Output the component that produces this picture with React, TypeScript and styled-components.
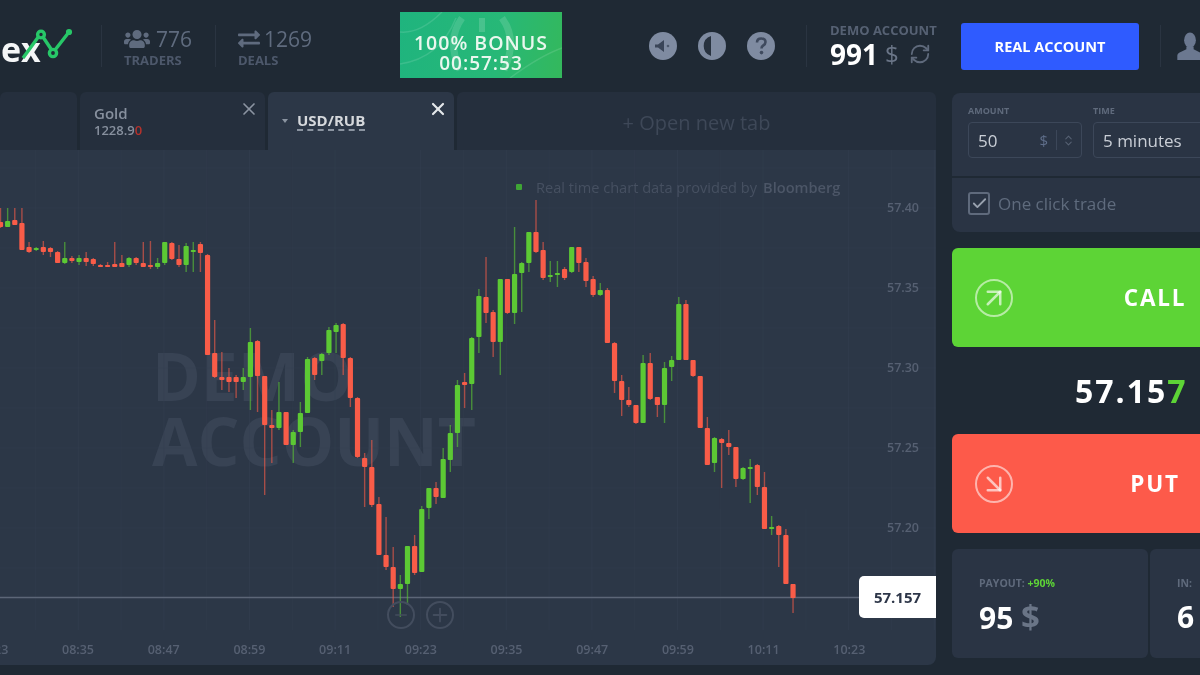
import styled, { createGlobalStyle } from 'styled-components';
import { ArrowDownRight, ArrowUpRight, Check, ChevronsUpDown, Minus, Plus, RefreshCw, X } from 'lucide-react';
import { FaExchangeAlt, FaUsers } from 'react-icons/fa';

const GlobalStyle = createGlobalStyle`
  html, body {
    margin: 0;
    background: #1f2934;
  }
  * {
    box-sizing: border-box;
  }
`;

type Candle = [number, number, number, number, number, 'r' | 'g'];

// index, wick top, wick bottom, body top, body bottom, colour
const candles: Candle[] = [
  [0, 208, 228, 222, 227, 'r'], [1, 208, 227, 221, 227, 'g'], [2, 208, 225, 220, 225, 'r'], [3, 208, 250, 223, 250, 'r'],
  [4, 242, 253, 247, 252, 'r'], [5, 247, 251, 248, 250, 'g'], [6, 241, 255, 247, 252, 'r'], [7, 247, 257, 248, 252, 'r'],
  [8, 251, 263, 252, 263, 'r'], [9, 242, 264, 258, 263, 'g'], [10, 256, 263, 258, 261, 'r'], [11, 255, 265, 258, 262, 'g'],
  [12, 252, 266, 258, 262, 'r'], [13, 258, 266, 259, 264, 'r'], [14, 264, 267, 265, 267, 'r'], [15, 262, 267, 265, 267, 'r'],
  [16, 242, 267, 264, 267, 'r'], [17, 255, 267, 263, 267, 'r'], [18, 257, 267, 258, 265, 'g'], [19, 257, 265, 258, 263, 'r'],
  [20, 242, 267, 263, 267, 'r'], [21, 241, 269, 265, 267, 'r'], [22, 258, 269, 263, 267, 'g'], [23, 242, 265, 242, 263, 'g'],
  [24, 242, 260, 243, 259, 'r'], [25, 245, 267, 259, 265, 'r'], [26, 243, 272, 246, 265, 'g'], [27, 242, 272, 250, 252, 'g'],
  [28, 242, 272, 244, 253, 'r'], [29, 254, 355, 255, 355, 'r'], [30, 320, 378, 353, 377, 'r'], [31, 352, 390, 377, 380, 'r'],
  [32, 368, 392, 377, 382, 'r'], [33, 375, 398, 377, 382, 'r'], [34, 368, 390, 377, 382, 'g'], [35, 328, 410, 342, 377, 'g'],
  [36, 340, 412, 341, 376, 'r'], [37, 376, 495, 376, 425, 'r'], [38, 410, 463, 425, 428, 'r'], [39, 382, 430, 412, 428, 'g'],
  [40, 412, 445, 412, 445, 'r'], [41, 430, 463, 432, 445, 'g'], [42, 402, 447, 413, 432, 'g'], [43, 357, 413, 359, 413, 'g'],
  [44, 357, 380, 358, 375, 'r'], [45, 353, 375, 354, 361, 'g'], [46, 327, 355, 330, 353, 'g'], [47, 323, 353, 325, 332, 'g'],
  [48, 323, 375, 324, 358, 'r'], [49, 357, 407, 358, 398, 'r'], [50, 397, 458, 398, 457, 'r'], [51, 453, 507, 458, 467, 'r'],
  [52, 440, 507, 467, 505, 'r'], [53, 497, 555, 504, 555, 'r'], [54, 517, 570, 555, 567, 'r'], [55, 547, 607, 567, 589, 'r'],
  [56, 575, 617, 584, 589, 'g'], [57, 546, 605, 546, 584, 'g'], [58, 535, 575, 546, 573, 'r'], [59, 506, 572, 509, 572, 'g'],
  [60, 488, 519, 488, 508, 'g'], [61, 482, 504, 488, 497, 'r'], [62, 448, 498, 459, 498, 'g'], [63, 425, 472, 433, 460, 'g'],
  [64, 380, 447, 385, 433, 'g'], [65, 373, 408, 382, 385, 'r'], [66, 337, 410, 338, 384, 'g'], [67, 289, 353, 296, 337, 'g'],
  [68, 257, 323, 297, 313, 'r'], [69, 310, 357, 312, 342, 'r'], [70, 279, 375, 279, 342, 'g'], [71, 279, 314, 279, 313, 'r'],
  [72, 227, 324, 274, 313, 'g'], [73, 262, 312, 263, 273, 'g'], [74, 232, 272, 232, 263, 'g'], [75, 200, 253, 232, 252, 'r'],
  [76, 242, 280, 250, 278, 'r'], [77, 261, 282, 275, 277, 'g'], [78, 261, 287, 273, 275, 'g'], [79, 267, 280, 269, 278, 'r'],
  [80, 247, 273, 247, 272, 'g'], [81, 247, 272, 247, 263, 'r'], [82, 258, 287, 262, 281, 'r'], [83, 276, 297, 279, 295, 'r'],
  [84, 283, 296, 290, 295, 'g'], [85, 288, 343, 290, 343, 'r'], [86, 342, 393, 343, 381, 'r'], [87, 375, 416, 381, 400, 'r'],
  [88, 387, 407, 400, 405, 'r'], [89, 405, 424, 405, 423, 'r'], [90, 355, 423, 363, 423, 'g'], [91, 353, 400, 363, 399, 'r'],
  [92, 397, 417, 397, 405, 'r'], [93, 362, 423, 368, 405, 'g'], [94, 356, 381, 360, 367, 'g'], [95, 297, 360, 304, 360, 'g'],
  [96, 300, 360, 304, 360, 'r'], [97, 360, 377, 360, 376, 'r'], [98, 376, 428, 376, 428, 'r'], [99, 417, 465, 428, 465, 'r'],
  [100, 437, 472, 438, 463, 'g'], [101, 438, 488, 439, 443, 'r'], [102, 430, 455, 443, 447, 'r'], [103, 447, 487, 447, 479, 'r'],
  [104, 467, 480, 468, 479, 'g'], [105, 459, 503, 467, 469, 'g'], [106, 464, 495, 465, 487, 'r'], [107, 472, 529, 487, 529, 'r'],
  [108, 516, 535, 527, 529, 'g'], [109, 525, 567, 526, 535, 'r'], [110, 529, 584, 535, 584, 'r'], [111, 584, 613, 584, 598, 'r'],
];

const priceLabels = ['57.40', '57.35', '57.30', '57.25', '57.20'];
const timeLabels = ['08:23', '08:35', '08:47', '08:59', '09:11', '09:23', '09:35', '09:47', '09:59', '10:11', '10:23'];

const CandleChart = () => (
  <ChartSvg viewBox="0 150 936 515">
    {Array.from({ length: 22 }, (_, i) => (
      <line key={i} x1={35.5 + i * 42.8} x2={35.5 + i * 42.8} y1={150} y2={630} stroke="#354052" strokeWidth={1} opacity={i % 2 ? 0.5 : 0.3} />
    ))}
    {Array.from({ length: 11 }, (_, i) => (
      <line key={i} x1={0} x2={936} y1={168 + i * 40} y2={168 + i * 40} stroke="#354052" strokeWidth={1} opacity={0.35} />
    ))}
    <line x1={0} x2={860} y1={597.5} y2={597.5} stroke="#5c6677" strokeWidth={1.4} />
    {candles.map(([i, wt, wb, bt, bb, c]) => {
      const x = 7.14 * i + 0.5;
      const color = c === 'r' ? '#f95c48' : '#5cc934';
      return (
        <g key={i}>
          <line x1={x} x2={x} y1={wt} y2={wb} stroke={color} strokeWidth={1.4} opacity={0.6} />
          <rect x={x - 2.6} y={bt} width={5.2} height={Math.max(bb - bt, 2)} rx={1} fill={color} />
        </g>
      );
    })}
    {priceLabels.map((p, i) => (
      <AxisText key={p} x={887} y={212 + i * 80}>{p}</AxisText>
    ))}
    {timeLabels.map((t, i) => (
      <AxisText key={t} x={-23.7 + i * 85.7} y={654}>{t}</AxisText>
    ))}
  </ChartSvg>
);

const LogoMark = () => (
  <svg width="52" height="36" viewBox="0 0 52 36" fill="none" stroke="#27c768" strokeWidth="3.4">
    <path d="M2 30 L18 8 M22 9 L30 21 M34 22 L48 4" />
    <circle cx="20" cy="6.5" r="3.4" />
    <circle cx="32" cy="25" r="3.6" />
    <circle cx="48" cy="4" r="1.4" fill="#27c768" />
  </svg>
);

const SpeakerIcon = () => (
  <svg width="30" height="30" viewBox="0 0 30 30">
    <circle cx="15" cy="15" r="14" fill="#7f8ba1" />
    <path d="M7 13.5 h3 l6-4.5 v12 l-6-4.5 h-3 z" fill="#3a4558" />
    <circle cx="20" cy="15" r="1.3" fill="#4c586c" />
  </svg>
);

const ContrastIcon = () => (
  <svg width="30" height="30" viewBox="0 0 30 30">
    <circle cx="15" cy="15" r="14" fill="#7f8ba1" />
    <path d="M14 5 a10.5 10.5 0 0 0 0 20 z" fill="#28323f" />
  </svg>
);

const HelpIcon = () => (
  <svg width="30" height="30" viewBox="0 0 30 30">
    <circle cx="15" cy="15" r="14" fill="#7f8ba1" />
    <path d="M11 11.5 q0-4 4.2-4 q4.3 0 4.3 3.6 q0 2.2-2.3 3.4 q-1.7.9-1.7 3" stroke="#3f4a5e" strokeWidth="2.6" fill="none" />
    <circle cx="15.5" cy="21.6" r="1.8" fill="#3f4a5e" />
  </svg>
);

const UserIcon = () => (
  <svg width="26" height="29" viewBox="0 0 28 32" fill="#6b7890">
    <ellipse cx="14" cy="9" rx="6.5" ry="8.5" />
    <path d="M10 16 h8 v3 l8 4 q2 1 2 3 v5 H0 v-5 q0-2 2-3 l8-4 z" />
  </svg>
);

const BonusPattern = () => (
  <BonusArt viewBox="0 0 162 66" fill="none" stroke="#fff">
    <path d="M62 6 q-16 22 -2 52" strokeWidth="7" opacity="0.14" />
    <path d="M102 6 q16 22 2 52" strokeWidth="7" opacity="0.14" />
    <path d="M82 6 v14" strokeWidth="6" opacity="0.16" />
    <path d="M0 52 q40-6 56-46 M110 66 q30-22 52-30 M0 20 q20 2 42-20" strokeWidth="1.5" opacity="0.12" />
  </BonusArt>
);

export default function App() {
  return (
    <>
      <GlobalStyle />
      <Page>
        <Header>
          <Logo>
            <LogoText>ex</LogoText>
            <LogoMark />
          </Logo>
          <HeaderSep />
          <StatGroup>
            <StatTop $gap={6}>
              <FaUsers size={26} />
              <StatValue>776</StatValue>
            </StatTop>
            <StatLabel>TRADERS</StatLabel>
          </StatGroup>
          <HeaderSep />
          <StatGroup>
            <StatTop $gap={4}>
              <FaExchangeAlt size={22} />
              <StatValue>1269</StatValue>
            </StatTop>
            <StatLabel>DEALS</StatLabel>
          </StatGroup>
          <Bonus>
            <BonusPattern />
            <BonusTitle>100% BONUS</BonusTitle>
            <BonusTimer>00:57:53</BonusTimer>
          </Bonus>
          <HeaderIcons>
            <SpeakerIcon />
            <ContrastIcon />
            <HelpIcon />
          </HeaderIcons>
          <HeaderSep />
          <Balance>
            <BalanceLabel>DEMO ACCOUNT</BalanceLabel>
            <BalanceRow>
              <BalanceValue>991</BalanceValue>
              <BalanceCurrency>$</BalanceCurrency>
              <RefreshCw size={22} color="#5f6a7c" />
            </BalanceRow>
          </Balance>
          <RealButton>REAL ACCOUNT</RealButton>
          <HeaderSep />
          <UserSlot>
            <UserIcon />
          </UserSlot>
        </Header>

        <Main>
          <ChartColumn>
            <Tabs>
              <Tab $width={77} />
              <Tab $width={185}>
                <TabName>Gold</TabName>
                <TabPrice>
                  1228.9<RedDigit>0</RedDigit>
                </TabPrice>
                <TabClose>
                  <X size={20} />
                </TabClose>
              </Tab>
              <Tab $width={186} $active>
                <ActivePair>
                  <Caret />
                  <PairName>USD/RUB</PairName>
                </ActivePair>
                <TabClose $active>
                  <X size={20} strokeWidth={2.6} />
                </TabClose>
              </Tab>
              <NewTab>+ Open new tab</NewTab>
            </Tabs>
            <ChartArea>
              <Watermark>
                DEMO
                <br />
                ACCOUNT
              </Watermark>
              <CandleChart />
              <Provider>
                <ProviderDot />
                Real time chart data provided by
                <ProviderName>Bloomberg</ProviderName>
              </Provider>
              <PriceTag>57.157</PriceTag>
              <ZoomButtons>
                <ZoomButton>
                  <Minus size={18} />
                </ZoomButton>
                <ZoomButton>
                  <Plus size={22} />
                </ZoomButton>
              </ZoomButtons>
            </ChartArea>
          </ChartColumn>

          <Sidebar>
            <OrderPanel>
              <Field $width={114}>
                <FieldLabel>AMOUNT</FieldLabel>
                <FieldBox>
                  <FieldValue>50</FieldValue>
                  <FieldUnit>$</FieldUnit>
                  <FieldStepper>
                    <ChevronsUpDown size={13} />
                  </FieldStepper>
                </FieldBox>
              </Field>
              <Field $width={140}>
                <FieldLabel>TIME</FieldLabel>
                <FieldBox>
                  <FieldValue>5 minutes</FieldValue>
                </FieldBox>
              </Field>
            </OrderPanel>
            <OneClickPanel>
              <Checkbox>
                <Check size={17} strokeWidth={2.6} />
              </Checkbox>
              <OneClickText>One click trade</OneClickText>
            </OneClickPanel>
            <TradeButton $kind="call">
              <TradeIcon>
                <ArrowUpRight size={30} strokeWidth={2} />
              </TradeIcon>
              <TradeLabel>CALL</TradeLabel>
            </TradeButton>
            <PriceRow>
              57.15<GreenDigit>7</GreenDigit>
            </PriceRow>
            <TradeButton $kind="put">
              <TradeIcon>
                <ArrowDownRight size={30} strokeWidth={2} />
              </TradeIcon>
              <TradeLabel>PUT</TradeLabel>
            </TradeButton>
            <Summary>
              <SummaryCell $width={196}>
                <SummaryLabel>
                  PAYOUT: <GreenDigit>+90%</GreenDigit>
                </SummaryLabel>
                <SummaryValue>
                  95 <SummaryUnit>$</SummaryUnit>
                </SummaryValue>
              </SummaryCell>
              <SummaryCell $width={100}>
                <SummaryLabel>IN:</SummaryLabel>
                <SummaryValue>6</SummaryValue>
              </SummaryCell>
            </Summary>
          </Sidebar>
        </Main>
      </Page>
    </>
  );
}

const Page = styled.div`
  width: 1200px;
  height: 675px;
  overflow: hidden;
  background: #1f2934;
  font-family: 'Open Sans', 'Liberation Sans', sans-serif;
  filter: blur(0.6px);
`;
const Header = styled.header`
  display: flex;
  align-items: center;
  height: 92px;
  & > * {
    flex-shrink: 0;
  }
`;
const Logo = styled.div`
  display: flex;
  align-items: flex-start;
  width: 101px;
  height: 36px;
`;
const LogoText = styled.span`
  font-size: 34px;
  font-weight: 700;
  color: #f4f6f7;
  line-height: 36px;
  margin-left: 1px;
  margin-right: -20px;
  padding-top: 3px;
`;
const HeaderSep = styled.div`
  width: 1px;
  height: 42px;
  background: #2a3441;
`;
const StatGroup = styled.div`
  display: flex;
  flex-direction: column;
  padding-left: 22px;
  color: #5f6b7e;
  width: 113px;
`;
const StatTop = styled.div<{ $gap: number }>`
  display: flex;
  align-items: center;
  gap: ${p => p.$gap}px;
  height: 28px;
`;
const StatValue = styled.span`
  font-size: 21px;
  color: #5f6b7e;
`;
const StatLabel = styled.span`
  font-size: 13px;
  font-weight: 700;
  color: #4d586b;
  line-height: 15px;
`;
const Bonus = styled.div`
  position: relative;
  width: 162px;
  height: 66px;
  margin-left: 71px;
  margin-bottom: 2px;
  padding-top: 15px;
  display: flex;
  flex-direction: column;
  align-items: center;
  justify-content: center;
  background: linear-gradient(100deg, #1fb47e, #27b877 60%, #34b85c);
  color: #e9f7ee;
`;
const BonusArt = styled.svg`
  position: absolute;
  inset: 0;
  width: 100%;
  height: 100%;
`;
const BonusTitle = styled.span`
  position: relative;
  font-size: 19.5px;
  font-weight: 600;
  letter-spacing: 1px;
  line-height: 21px;
`;
const BonusTimer = styled.span`
  position: relative;
  font-size: 19px;
  font-weight: 600;
  letter-spacing: 1px;
  line-height: 20px;
`;
const HeaderIcons = styled.div`
  display: flex;
  align-items: center;
  gap: 19px;
  margin-left: 86px;
  margin-right: 30px;
`;
const Balance = styled.div`
  display: flex;
  flex-direction: column;
  margin-left: 23px;
  width: 131px;
`;
const BalanceLabel = styled.span`
  font-size: 13px;
  font-weight: 700;
  color: #566173;
  line-height: 15px;
`;
const BalanceRow = styled.div`
  display: flex;
  align-items: center;
  height: 32px;
`;
const BalanceValue = styled.span`
  font-size: 28px;
  font-weight: 700;
  color: #fff;
`;
const BalanceCurrency = styled.span`
  font-size: 24px;
  color: #6a7587;
  margin: 0 10px 0 7px;
`;
const RealButton = styled.button`
  width: 178px;
  height: 47px;
  border: 0;
  border-radius: 3px;
  background: #2f5bff;
  color: #fff;
  font-family: inherit;
  font-size: 14.5px;
  font-weight: 700;
  margin-right: 21px;
`;
const UserSlot = styled.div`
  margin-left: 16px;
  display: flex;
`;
const Main = styled.div`
  display: flex;
  gap: 16px;
  height: 573px;
`;
const ChartColumn = styled.section`
  width: 936px;
  height: 573px;
  flex-shrink: 0;
  display: flex;
  flex-direction: column;
`;
const Tabs = styled.div`
  display: flex;
  height: 58px;
  gap: 3px;
  flex-shrink: 0;
`;
const Tab = styled.div<{ $width: number; $active?: boolean }>`
  position: relative;
  width: ${p => p.$width}px;
  flex-shrink: 0;
  border-radius: 6px 6px 0 0;
  background: ${p => (p.$active ? '#2c3747' : '#252f3d')};
  padding: 12px 14px;
`;
const TabName = styled.div`
  font-size: 15px;
  font-weight: 600;
  color: #87909e;
  line-height: 18px;
`;
const TabPrice = styled.div`
  font-size: 13px;
  font-weight: 600;
  color: #87909e;
  line-height: 16px;
`;
const RedDigit = styled.span`
  color: #b5322c;
`;
const TabClose = styled.span<{ $active?: boolean }>`
  position: absolute;
  top: 7px;
  right: 6px;
  display: flex;
  color: ${p => (p.$active ? '#e4e7ea' : '#8b94a1')};
`;
const ActivePair = styled.div`
  display: flex;
  align-items: center;
  gap: 9px;
  padding-top: 7px;
`;
const Caret = styled.span`
  width: 0;
  height: 0;
  border-left: 3px solid transparent;
  border-right: 3px solid transparent;
  border-top: 4px solid #8b94a1;
`;
const PairName = styled.span`
  font-size: 15px;
  font-weight: 700;
  color: #d5d8dc;
  line-height: 18px;
  border-bottom: 2px dashed #8b94a1;
`;
const NewTab = styled.div`
  flex: 1;
  border-radius: 6px 6px 0 0;
  background: #252f3d;
  display: flex;
  align-items: center;
  justify-content: center;
  font-size: 20px;
  color: #3e4858;
  padding-top: 2px;
`;
const ChartArea = styled.div`
  position: relative;
  height: 515px;
  background: #2c3747;
  border-radius: 0 0 8px 0;
  overflow: hidden;
`;
const ChartSvg = styled.svg`
  position: absolute;
  inset: 0;
  width: 936px;
  height: 515px;
  display: block;
`;
const AxisText = styled.text`
  font-family: 'Open Sans', 'Liberation Sans', sans-serif;
  font-size: 12.5px;
  font-weight: 600;
  fill: #566072;
`;
const Watermark = styled.div`
  position: absolute;
  left: 152px;
  top: 193px;
  font-size: 66px;
  font-weight: 700;
  line-height: 65px;
  color: #384354;
`;
const Provider = styled.div`
  position: absolute;
  top: 27px;
  left: 516px;
  display: flex;
  align-items: center;
  font-size: 14.6px;
  color: #465061;
`;
const ProviderDot = styled.span`
  width: 6px;
  height: 6px;
  margin-right: 14px;
  background: #3fa535;
  border-radius: 1px;
`;
const ProviderName = styled.span`
  margin-left: 6px;
  font-weight: 600;
  color: #4c5667;
`;
const PriceTag = styled.div`
  position: absolute;
  left: 859px;
  top: 426px;
  width: 77px;
  height: 42px;
  display: flex;
  align-items: center;
  justify-content: center;
  background: #fff;
  border-radius: 5px 0 0 5px;
  color: #2d3648;
  font-size: 15px;
  font-weight: 700;
`;
const ZoomButtons = styled.div`
  position: absolute;
  left: 387px;
  top: 451px;
  display: flex;
  gap: 11px;
`;
const ZoomButton = styled.span`
  width: 28px;
  height: 28px;
  border-radius: 50%;
  border: 2px solid #434d5e;
  color: #434d5e;
  display: flex;
  align-items: center;
  justify-content: center;
`;
const Sidebar = styled.aside`
  width: 300px;
  flex-shrink: 0;
  display: flex;
  flex-direction: column;
`;
const OrderPanel = styled.div`
  height: 83px;
  background: #2a3444;
  border-radius: 8px 8px 0 0;
  display: flex;
  gap: 11px;
  padding: 12px 16px;
  margin-top: 1px;
`;
const Field = styled.div<{ $width: number }>`
  width: ${p => p.$width}px;
  flex-shrink: 0;
`;
const FieldLabel = styled.div`
  font-size: 9px;
  font-weight: 700;
  color: #5f6a7c;
  line-height: 12px;
  margin-bottom: 5px;
`;
const FieldBox = styled.div`
  height: 36px;
  border: 1px solid #3c4759;
  border-radius: 4px;
  display: flex;
  align-items: center;
  padding-left: 9px;
`;
const FieldValue = styled.span`
  flex: 1;
  font-size: 17px;
  color: #c9ced6;
`;
const FieldUnit = styled.span`
  font-size: 15px;
  color: #5f6e8a;
  padding-right: 8px;
  border-right: 1px solid #3c4759;
  margin-right: 4px;
`;
const FieldStepper = styled.span`
  color: #566173;
  display: flex;
  padding-right: 6px;
  padding-left: 1px;
`;
const OneClickPanel = styled.div`
  height: 54px;
  margin-top: 2px;
  padding-bottom: 3px;
  background: #2a3444;
  border-radius: 0 0 8px 8px;
  display: flex;
  align-items: center;
  gap: 8px;
  padding-left: 16px;
`;
const Checkbox = styled.span`
  width: 22px;
  height: 23px;
  border: 2px solid #5f6a7c;
  border-radius: 3px;
  color: #98a1ae;
  display: flex;
  align-items: center;
  justify-content: center;
`;
const OneClickText = styled.span`
  font-size: 17px;
  color: #5f6b7d;
`;
const TradeButton = styled.div<{ $kind: 'call' | 'put' }>`
  height: 99px;
  flex-shrink: 0;
  margin-top: ${p => (p.$kind === 'call' ? '16px' : '0')};
  border-radius: 6px;
  background: ${p => (p.$kind === 'call' ? '#5dd436' : '#fd5a4a')};
  display: flex;
  align-items: center;
  padding-left: 23px;
`;
const TradeIcon = styled.span`
  width: 38px;
  height: 38px;
  border: 2px solid rgba(255, 255, 255, 0.55);
  border-radius: 50%;
  color: rgba(255, 255, 255, 0.65);
  display: flex;
  align-items: center;
  justify-content: center;
`;
const TradeLabel = styled.span`
  width: 66px;
  margin-left: 109px;
  display: flex;
  justify-content: center;
  white-space: nowrap;
  font-size: 22.5px;
  font-weight: 700;
  letter-spacing: 1.8px;
  color: #fff;
`;
const PriceRow = styled.div`
  height: 87px;
  flex-shrink: 0;
  padding-left: 123px;
  display: flex;
  align-items: center;
  font-size: 32px;
  font-weight: 700;
  letter-spacing: 2px;
  color: #fff;
`;
const GreenDigit = styled.span`
  color: #5dd436;
`;
const Summary = styled.div`
  margin-top: 16px;
  height: 109px;
  display: flex;
  gap: 2px;
`;
const SummaryCell = styled.div<{ $width: number }>`
  width: ${p => p.$width}px;
  background: #2a3444;
  border-radius: 6px;
  padding: 28px 27px;
  flex-shrink: 0;
`;
const SummaryLabel = styled.div`
  font-size: 10.5px;
  font-weight: 700;
  color: #5f6a7c;
  line-height: 12px;
  margin-bottom: 7px;
`;
const SummaryValue = styled.div`
  font-size: 30px;
  font-weight: 700;
  color: #fff;
  line-height: 42px;
`;
const SummaryUnit = styled.span`
  color: #6a7587;
  font-size: 33px;
`;
